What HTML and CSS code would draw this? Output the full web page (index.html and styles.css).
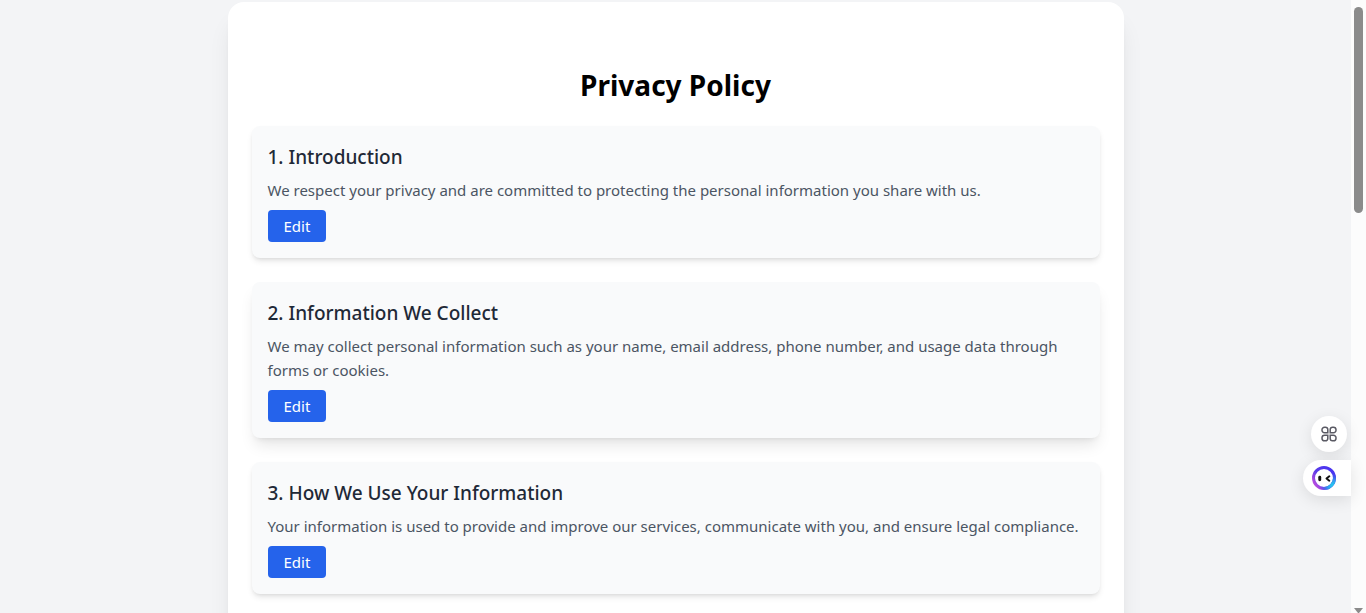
FILE: index.html
```html
<!DOCTYPE html>
<html lang="en">
<head>
<meta charset="utf-8">
<meta name="viewport" content="width=device-width, initial-scale=1">
<title>Privacy Policy</title>
<link rel="stylesheet" href="styles.css">
</head>
<body>
<div class="viewport">
  <main class="page">
    <article class="policy">
      <h1 class="policy-title">Privacy Policy</h1>
      <div class="sections">
        <section class="section">
          <h2 class="section-title">1. Introduction</h2>
          <p class="section-text">We respect your privacy and are committed to protecting the personal information you share with us.</p>
          <button class="edit" type="button">Edit</button>
        </section>
        <section class="section section-raised">
          <h2 class="section-title">2. Information We Collect</h2>
          <p class="section-text">We may collect personal information such as your name, email address, phone number, and usage data through forms or cookies.</p>
          <button class="edit" type="button">Edit</button>
        </section>
        <section class="section">
          <h2 class="section-title">3. How We Use Your Information</h2>
          <p class="section-text">Your information is used to provide and improve our services, communicate with you, and ensure legal compliance.</p>
          <button class="edit" type="button">Edit</button>
        </section>
      </div>
    </article>
  </main>
  <div class="scrollbar" aria-hidden="true">
    <div class="thumb"></div>
    <svg class="arrow" width="9" height="5" viewBox="0 0 9 5"><path d="M0 0h9L5 5H4z" fill="#8b8b8b"/></svg>
  </div>
  <div class="floating">
    <button class="apps" type="button" aria-label="Apps">
      <svg width="16" height="16" viewBox="0 0 16 16" fill="none" stroke="#5a5a64" stroke-width="1.5">
        <path d="M3.6 1.2h.9a2.3 2.3 0 0 1 2.3 2.3v3.3H3.6a2.6 2.6 0 0 1-2.6-2.6v-.4a2.6 2.6 0 0 1 2.6-2.6z"/>
        <path d="M12.4 1.2h-.9a2.3 2.3 0 0 0-2.3 2.3v3.3h3.2a2.6 2.6 0 0 0 2.6-2.6v-.4a2.6 2.6 0 0 0-2.6-2.6z"/>
        <path d="M3.6 14.8h.9a2.3 2.3 0 0 0 2.3-2.3V9.2H3.6A2.6 2.6 0 0 0 1 11.8v.4a2.6 2.6 0 0 0 2.6 2.6z"/>
        <path d="M12.4 14.8h-.9a2.3 2.3 0 0 1-2.3-2.3V9.2h3.2a2.6 2.6 0 0 1 2.6 2.6v.4a2.6 2.6 0 0 1-2.6 2.6z"/>
      </svg>
    </button>
    <button class="assistant" type="button" aria-label="Assistant">
      <svg width="24" height="24" viewBox="0 0 24 24" fill="none">
        <defs>
          <linearGradient id="ring" x1="4" y1="20" x2="21" y2="8" gradientUnits="userSpaceOnUse">
            <stop offset="0" stop-color="#b44be0"/>
            <stop offset=".4" stop-color="#5a3be8"/>
            <stop offset="1" stop-color="#4a35f0"/>
          </linearGradient>
          <radialGradient id="glow" cx="20" cy="19" r="12" gradientUnits="userSpaceOnUse">
            <stop offset="0" stop-color="#27c8ee"/>
            <stop offset=".4" stop-color="#2f9fee"/>
            <stop offset="1" stop-color="#3f60ee" stop-opacity="0"/>
          </radialGradient>
        </defs>
        <circle cx="12" cy="12" r="10.5" stroke="url(#ring)" stroke-width="3"/>
        <circle cx="12" cy="12" r="10.5" stroke="url(#glow)" stroke-width="3"/>
        <rect x="6.3" y="9.8" width="2.9" height="5.4" rx="1.4" fill="#111"/>
        <path d="M17.3 10.3l-2.8 2.2 2.8 2.2" stroke="#111" stroke-width="2" stroke-linecap="round" stroke-linejoin="round"/>
      </svg>
    </button>
  </div>
</div>
</body>
</html>
```
FILE: styles.css
```css
* {
  box-sizing: border-box;
  margin: 0;
}

body {
  background: #f3f4f6;
  color: #000;
  font-family: "Segoe UI", "Noto Sans", sans-serif;
  font-size: 15px;
  line-height: 24px;
}

.viewport {
  position: relative;
  display: flex;
  height: 100vh;
  overflow: hidden;
}

.page {
  flex: 1;
  padding-top: 2px;
}

.policy {
  max-width: 896px;
  margin: 0 auto;
  padding: 64px 24px;
  background: #fff;
  border-radius: 16px;
  box-shadow: 0 20px 25px -5px rgb(0 0 0 / .1), 0 8px 10px -6px rgb(0 0 0 / .1);
}

.policy-title {
  margin-bottom: 22px;
  font-size: 28px;
  font-weight: 700;
  line-height: 38px;
  text-align: center;
}

.sections {
  display: flex;
  flex-direction: column;
  gap: 24px;
}

.section {
  padding: 16px;
  background: #f9fafb;
  border-radius: 8px;
  box-shadow: 0 4px 6px -1px rgb(0 0 0 / .1), 0 2px 4px -2px rgb(0 0 0 / .1);
}

.section-raised {
  box-shadow: 0 10px 15px -3px rgb(0 0 0 / .1), 0 4px 6px -4px rgb(0 0 0 / .1);
}

.section-title {
  margin-bottom: 6px;
  color: #1f2937;
  font-size: 19px;
  font-weight: 500;
  line-height: 30px;
}

.section-text {
  margin-bottom: 8px;
  color: #4b5563;
}

.edit {
  display: block;
  padding: 4px 16px;
  border: 0;
  border-radius: 4px;
  background: #2563eb;
  color: #fff;
  font: inherit;
}

.scrollbar {
  display: flex;
  flex-direction: column;
  align-items: center;
  justify-content: space-between;
  width: 15px;
  padding-top: 7px;
  background: #fcfcfc;
}

.thumb {
  width: 9px;
  height: 34%;
  border-radius: 5px;
  background: #8b8b8b;
}

.floating {
  position: absolute;
  right: 15px;
  bottom: 117px;
  display: flex;
  flex-direction: column;
  align-items: flex-end;
  gap: 8px;
}

.apps,
.assistant {
  display: flex;
  align-items: center;
  height: 36px;
  border: 0;
  background: #fff;
  box-shadow: 0 4px 16px rgb(0 0 0 / .1);
}

.apps {
  justify-content: center;
  width: 36px;
  margin-right: 4px;
  padding: 0;
  border-radius: 18px;
}

.assistant {
  width: 48px;
  padding: 0 9px;
  border-radius: 18px 0 0 18px;
}
```
